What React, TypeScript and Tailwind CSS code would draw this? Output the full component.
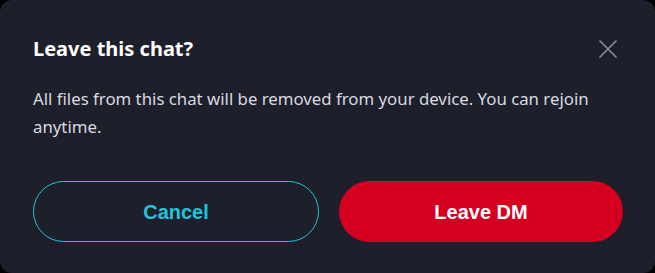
const CloseIcon = () => (
  <svg width="18" height="18" viewBox="0 0 18 18" fill="none" stroke="#8b8f99" strokeWidth="1.6" strokeLinecap="round">
    <path d="M1 1L17 17M17 1L1 17" />
  </svg>
)

const App = () => {
  return (
    <div className="w-[655px] h-[273px] bg-black">
      <div className="w-full h-full rounded-[12px] bg-[#1d1f2a] pl-[33px] pr-[32px] pt-[33px] flex flex-col">
        <div className="flex items-center justify-between">
          <h2 className="text-[20px] leading-[32px] font-bold text-white font-['Noto_Sans',sans-serif]">
            Leave this chat?
          </h2>
          <button className="mr-[6px] flex items-center justify-center">
            <CloseIcon />
          </button>
        </div>
        <p className="mt-[20px] text-[16.8px] leading-[28px] text-[#d8dae0] font-['Noto_Sans',sans-serif]">
          All files from this chat will be removed from your device. You can rejoin anytime.
        </p>
        <div className="mt-[40px] flex gap-[20px]">
          <button className="flex-1 h-[61px] rounded-full border border-[#22c3dc] text-[#22c3dc] text-[20px] font-bold font-['Liberation_Sans',Arial,sans-serif]">
            Cancel
          </button>
          <button className="flex-1 h-[61px] rounded-full bg-[#d50020] text-white text-[20px] font-bold font-['Liberation_Sans',Arial,sans-serif]">
            Leave DM
          </button>
        </div>
      </div>
    </div>
  )
}

export default App
